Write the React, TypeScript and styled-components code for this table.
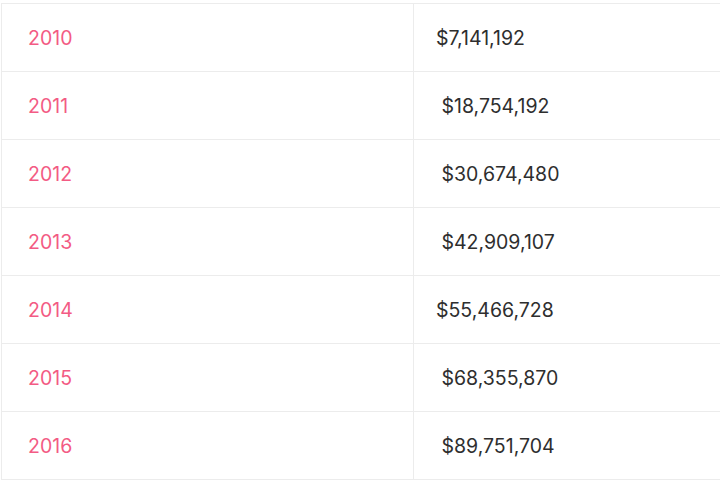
import React from "react";
import styled, { createGlobalStyle } from "styled-components";

const Global = createGlobalStyle`
  html, body { margin: 0; padding: 0; background: #ffffff; overflow: hidden; }
  body { font-family: Inter, Lato, sans-serif; }
`;

const Wrap = styled.div`
  padding: 3px 0 0 1px;
`;

const Table = styled.div`
  border-top: 1px solid #ececec;
  border-left: 1px solid #ececec;
`;

const Row = styled.div`
  display: grid;
  grid-template-columns: 412px 1fr;
  border-bottom: 1px solid #ececec;
  height: 67px;
`;

const Cell = styled.div<{ $year?: boolean }>`
  display: flex;
  align-items: center;
  padding-left: ${(p) => (p.$year ? "26px" : "22px")};
  padding-top: 1px;
  border-right: ${(p) => (p.$year ? "1px solid #ececec" : "none")};
  font-size: 19.5px;
  font-weight: 400;
  color: ${(p) => (p.$year ? "#f35b84" : "#2e2e2e")};
  white-space: pre;
`;

const rows: [string, string][] = [
  ["2010", "$7,141,192"],
  ["2011", " $18,754,192"],
  ["2012", " $30,674,480"],
  ["2013", " $42,909,107"],
  ["2014", "$55,466,728"],
  ["2015", " $68,355,870"],
  ["2016", " $89,751,704"],
];

export default function App() {
  return (
    <>
      <Global />
      <Wrap>
        <Table>
          {rows.map(([y, v]) => (
            <Row key={y}>
              <Cell $year>{y}</Cell>
              <Cell>{v}</Cell>
            </Row>
          ))}
        </Table>
      </Wrap>
    </>
  );
}
